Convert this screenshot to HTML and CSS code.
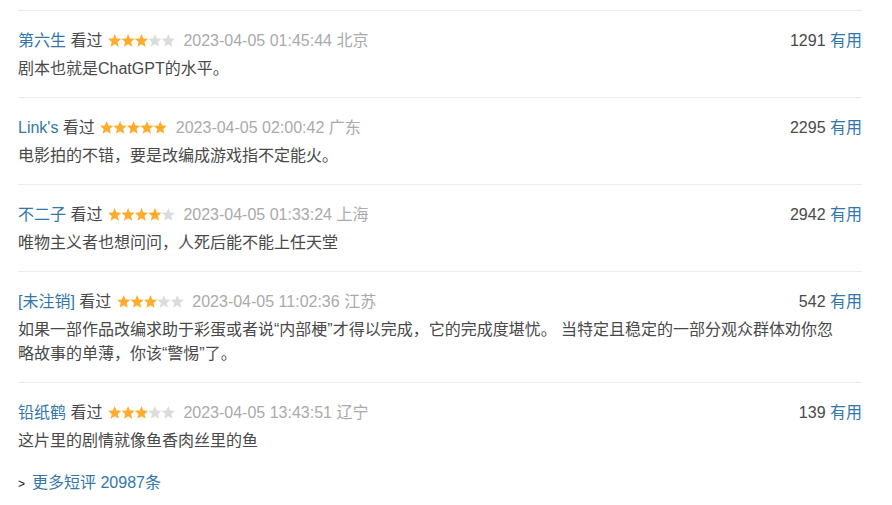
FILE: index.html
```html
<!DOCTYPE html>
<html lang="zh-CN">
<head>
  <meta charset="UTF-8" />
  <meta name="viewport" content="width=device-width, initial-scale=1.0"/>
  <title>短评</title>
  <link rel="stylesheet" href="styles.css">
</head>
<body>
  <svg class="defs" width="0" height="0">
    <defs>
      <polygon id="star" points="6.7,0 8.55,4.45 13.36,4.84 9.7,7.97 10.81,12.66 6.7,10.15 2.59,12.66 3.7,7.97 0.04,4.84 4.85,4.45"/>
    </defs>
  </svg>

  <div class="comments">
    <div class="comment-item">
      <div class="meta">
        <span class="info">
          <a class="user" href="#">第六生</a> <span class="status">看过</span>
          <svg class="rating" width="67" height="13" viewBox="0 0 67 13">
            <use href="#star" x="0" class="on"/><use href="#star" x="13.4" class="on"/><use href="#star" x="26.8" class="on"/><use href="#star" x="40.2" class="off"/><use href="#star" x="53.6" class="off"/>
          </svg>
          <span class="time">2023-04-05 01:45:44</span> <span class="time">北京</span>
        </span>
        <span class="votes"><span class="count">1291</span> <a href="#">有用</a></span>
      </div>
      <p class="short">剧本也就是ChatGPT的水平。</p>
    </div>

    <div class="comment-item">
      <div class="meta">
        <span class="info">
          <a class="user" href="#">Link's</a> <span class="status">看过</span>
          <svg class="rating" width="67" height="13" viewBox="0 0 67 13">
            <use href="#star" x="0" class="on"/><use href="#star" x="13.4" class="on"/><use href="#star" x="26.8" class="on"/><use href="#star" x="40.2" class="on"/><use href="#star" x="53.6" class="on"/>
          </svg>
          <span class="time">2023-04-05 02:00:42</span> <span class="time">广东</span>
        </span>
        <span class="votes"><span class="count">2295</span> <a href="#">有用</a></span>
      </div>
      <p class="short">电影拍的不错，要是改编成游戏指不定能火。</p>
    </div>

    <div class="comment-item">
      <div class="meta">
        <span class="info">
          <a class="user" href="#">不二子</a> <span class="status">看过</span>
          <svg class="rating" width="67" height="13" viewBox="0 0 67 13">
            <use href="#star" x="0" class="on"/><use href="#star" x="13.4" class="on"/><use href="#star" x="26.8" class="on"/><use href="#star" x="40.2" class="on"/><use href="#star" x="53.6" class="off"/>
          </svg>
          <span class="time">2023-04-05 01:33:24</span> <span class="time">上海</span>
        </span>
        <span class="votes"><span class="count">2942</span> <a href="#">有用</a></span>
      </div>
      <p class="short">唯物主义者也想问问，人死后能不能上任天堂</p>
    </div>

    <div class="comment-item">
      <div class="meta">
        <span class="info">
          <a class="user" href="#">[未注销]</a> <span class="status">看过</span>
          <svg class="rating" width="67" height="13" viewBox="0 0 67 13">
            <use href="#star" x="0" class="on"/><use href="#star" x="13.4" class="on"/><use href="#star" x="26.8" class="on"/><use href="#star" x="40.2" class="off"/><use href="#star" x="53.6" class="off"/>
          </svg>
          <span class="time">2023-04-05 11:02:36</span> <span class="time">江苏</span>
        </span>
        <span class="votes"><span class="count">542</span> <a href="#">有用</a></span>
      </div>
      <p class="short">如果一部作品改编求助于彩蛋或者说“内部梗”才得以完成，它的完成度堪忧。 当特定且稳定的一部分观众群体劝你忽略故事的单薄，你该“警惕”了。</p>
    </div>

    <div class="comment-item">
      <div class="meta">
        <span class="info">
          <a class="user" href="#">铅纸鹤</a> <span class="status">看过</span>
          <svg class="rating" width="67" height="13" viewBox="0 0 67 13">
            <use href="#star" x="0" class="on"/><use href="#star" x="13.4" class="on"/><use href="#star" x="26.8" class="on"/><use href="#star" x="40.2" class="off"/><use href="#star" x="53.6" class="off"/>
          </svg>
          <span class="time">2023-04-05 13:43:51</span> <span class="time">辽宁</span>
        </span>
        <span class="votes"><span class="count">139</span> <a href="#">有用</a></span>
      </div>
      <p class="short">这片里的剧情就像鱼香肉丝里的鱼</p>
    </div>

    <p class="more"><span class="arrow">&gt;</span><a href="#">更多短评 20987条</a></p>
  </div>
</body>
</html>
```

FILE: styles.css
```css
body {
  margin: 0;
  background: #fff;
  font-family: "Liberation Sans", Arial, "Noto Sans CJK SC", sans-serif;
  font-size: 16px;
  color: #494949;
}
a {
  color: #3377aa;
  text-decoration: none;
}
.defs {
  position: absolute;
  width: 0;
  height: 0;
}
.comments {
  padding: 10px 30px 0 18px;
}
.comment-item {
  border-top: 1px solid #ececec;
  padding: 18px 0 16px;
}
.meta {
  display: flex;
  justify-content: space-between;
  align-items: center;
  line-height: 24px;
}
.status {
  color: #494949;
}
.rating {
  vertical-align: -1px;
  margin: 0 4px 0 1px;
}
.rating .on {
  fill: #ffac2d;
}
.rating .off {
  fill: #dcdcdc;
}
.time {
  color: #aaa;
}
.votes .count {
  color: #494949;
}
.short {
  margin: 4px 20px 0 0;
  line-height: 24px;
}
.more {
  margin: 2px 0 0;
  line-height: 24px;
}
.more .arrow {
  font-size: 12px;
  color: #111;
  margin-right: 7px;
}
```
